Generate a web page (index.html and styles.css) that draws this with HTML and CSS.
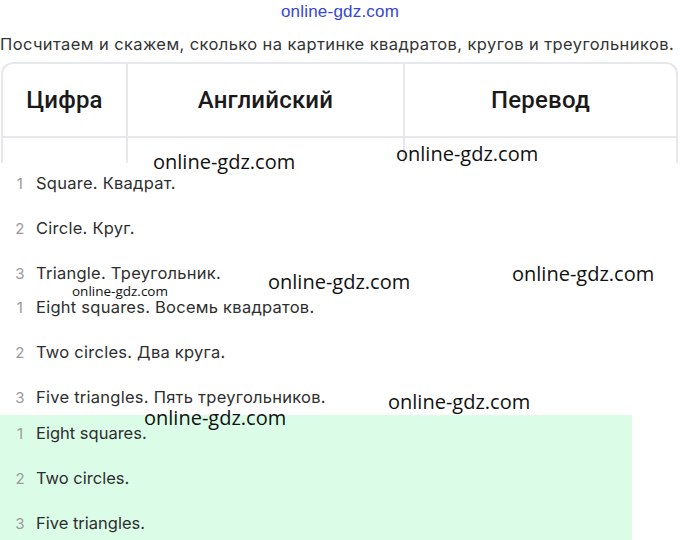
FILE: index.html
```html
<!DOCTYPE html>
<html lang="ru">
<head>
  <meta charset="UTF-8" />
  <meta name="viewport" content="width=device-width, initial-scale=1.0" />
  <title>Посчитаем и скажем</title>
  <link rel="stylesheet" href="styles.css">
</head>
<body>
  <div class="page">
    <div class="site-mark">online-gdz.com</div>
    <p class="task">Посчитаем и скажем, сколько на картинке квадратов, кругов и треугольников.</p>

    <div class="table">
      <div class="row head">
        <div class="cell c1">Цифра</div>
        <div class="cell c2">Английский</div>
        <div class="cell c3">Перевод</div>
      </div>
      <div class="row stub">
        <div class="cell c1"></div>
        <div class="cell c2"></div>
        <div class="cell c3"></div>
      </div>
    </div>

    <ol class="answers first">
      <li><span class="num">1</span>Square. Квадрат.</li>
      <li><span class="num">2</span>Circle. Круг.</li>
      <li><span class="num">3</span>Triangle. Треугольник.</li>
    </ol>
    <ol class="answers">
      <li><span class="num">1</span>Eight squares. Восемь квадратов.</li>
      <li><span class="num">2</span>Two circles. Два круга.</li>
      <li><span class="num">3</span>Five triangles. Пять треугольников.</li>
    </ol>
    <ol class="answers green">
      <li><span class="num">1</span>Eight squares.</li>
      <li><span class="num">2</span>Two circles.</li>
      <li><span class="num">3</span>Five triangles.</li>
    </ol>

    <!-- watermarks over the content -->
    <span class="wm" style="left:153px;top:149px">online-gdz.com</span>
    <span class="wm" style="left:396px;top:141px">online-gdz.com</span>
    <span class="wm" style="left:268px;top:269px">online-gdz.com</span>
    <span class="wm" style="left:512px;top:261px">online-gdz.com</span>
    <span class="wm" style="left:144px;top:405px">online-gdz.com</span>
    <span class="wm" style="left:388px;top:389px">online-gdz.com</span>
    <span class="wm small" style="left:72px;top:282px">online-gdz.com</span>
  </div>
</body>
</html>
```

FILE: styles.css
```css
* { box-sizing: border-box; }
body {
  margin: 0;
  background: #fff;
  font-family: Inter, "Noto Sans", sans-serif;
  color: #2b2b2b;
}
.page {
  position: relative;
  width: 680px;
  height: 540px;
  overflow: hidden;
}
.site-mark {
  height: 24px;
  line-height: 24px;
  text-align: center;
  font-family: "Liberation Sans", sans-serif;
  font-size: 17px;
  color: #3646d6;
  letter-spacing: 0.2px;
}
.task {
  margin: 8px 0 6px;
  height: 24px;
  line-height: 24px;
  font-size: 16.5px;
  letter-spacing: 0.4px;
  color: #333;
  white-space: nowrap;
}
.table {
  margin-left: 1px;
  width: 677px;
  border: 2px solid #e6e8eb;
  border-bottom: none;
  border-radius: 12px 12px 0 0;
}
.row {
  display: grid;
  grid-template-columns: 123px 277px 1fr;
}
.cell + .cell { border-left: 2px solid #e6e8eb; }
.head .cell {
  height: 74px;
  border-bottom: 2px solid #e6e8eb;
  display: flex;
  align-items: center;
  justify-content: center;
  font-family: Roboto, sans-serif;
  font-weight: 500;
  font-size: 24px;
  letter-spacing: 0.2px;
  color: #1a1a1a;
}
.stub .cell { height: 25px; }
.answers {
  list-style: none;
  margin: 0;
  padding: 5px 0;
  display: flex;
  flex-direction: column;
  gap: 21px;
}
.answers.first { margin-top: 3px; }
.answers.green {
  background: #dbfde8;
  width: 632px;
  padding: 6px 0 5px;
  margin-top: 1px;
}
.answers li {
  display: flex;
  align-items: center;
  height: 24px;
  padding-left: 14px;
  font-size: 16.5px;
  letter-spacing: 0.25px;
  color: #2e2e2e;
  white-space: nowrap;
}
.green li { letter-spacing: 0; }
.num {
  width: 12px;
  margin-right: 10px;
  text-align: center;
  color: #9a9a9a;
  font-size: 15px;
}
.wm {
  position: absolute;
  font-family: "Open Sans", sans-serif;
  font-size: 20px;
  line-height: 26px;
  color: #111;
  white-space: nowrap;
}
.wm.small {
  font-size: 13.5px;
  line-height: 18px;
}
```
